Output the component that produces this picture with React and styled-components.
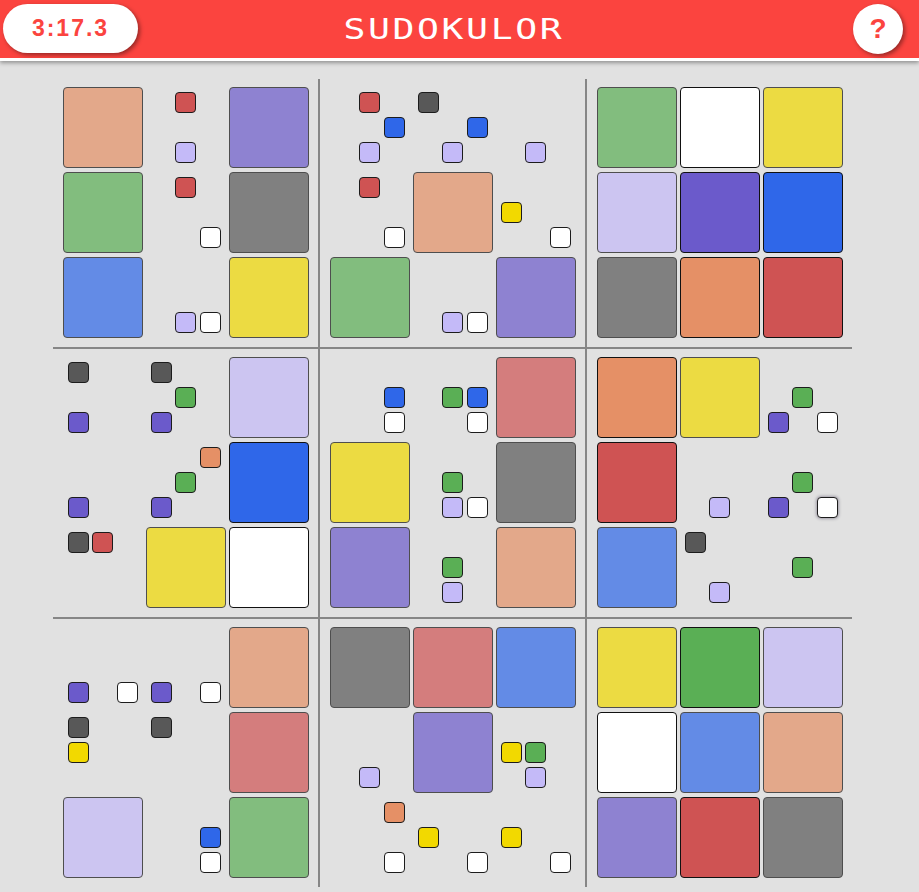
import React from 'react';
import styled, { createGlobalStyle } from 'styled-components';

const COLORS = {
  K: '#585858',
  R: '#cf5353',
  O: '#e59066',
  Y: '#f2d900',
  G: '#5aaf55',
  B: '#2f67e9',
  P: '#6b5acb',
  L: '#c4baf8',
  W: '#ffffff'
};
// place of each colour in the 3x3 note grid
const ORDER = 'KROYGBPLW';

// "=X" given square, "!X" placed square, otherwise notes
const BOARD = [
  ['=O', 'RL', '=P', 'RBL', 'KBL', 'L', '=G', '!W', '=Y'],
  ['=G', 'RW', '=K', 'RW', '=O', 'YW', '=L', '!P', '!B'],
  ['=B', 'LW', '=Y', '=G', 'LW', '=P', '=K', '!O', '!R'],
  ['KP', 'KGP', '=L', 'BW', 'GBW', '=R', '!O', '=Y', 'GPW'],
  ['P', 'OGP', '!B', '=Y', 'GLW', '=K', '!R', 'L', 'GPW'],
  ['KR', '=Y', '!W', '=P', 'GL', '=O', '=B', 'KL', 'G'],
  ['PW', 'PW', '=O', '=K', '=R', '=B', '=Y', '!G', '=L'],
  ['KY', 'K', '=R', 'L', '=P', 'YGL', '!W', '=B', '=O'],
  ['=L', 'BW', '=G', 'OW', 'YW', 'YW', '=P', '!R', '=K']
];
const FOCUS = { row: 4, col: 8, color: 'W' };

const GlobalStyle = createGlobalStyle`
  body {
    margin: 0;
    background-color: #e1e1e1;
    font-family: "Liberation Sans", Arial, sans-serif;
  }
`;

const Header = styled.div`
  height: 58px;
  background-color: #fb443f;
  border-bottom: 3px solid #ffffff;
  box-shadow: 0 2px 4px rgba(0, 0, 0, 0.35);
`;
const HeaderInner = styled.div`
  width: 904px;
  height: 100%;
  box-sizing: border-box;
  padding: 0 1px 0 3px;
  display: grid;
  grid-template-columns: 1fr auto 1fr;
  align-items: center;
`;
const Timer = styled.div`
  justify-self: start;
  width: 135px;
  height: 49px;
  margin-top: -2px;
  border-radius: 25px;
  background-color: #ffffff;
  box-shadow: 2px 2px 4px rgba(0, 0, 0, 0.4);
  display: flex;
  align-items: center;
  justify-content: center;
  color: #fb443f;
  font-weight: bold;
  font-size: 23px;
  letter-spacing: 2px;
`;
const Title = styled.div`
  color: #ffffff;
  font-family: "DejaVu Sans Mono", monospace;
  font-size: 28px;
  letter-spacing: 2px;
  margin-right: -2px;
  transform: scaleX(1.3);
`;
const Help = styled.div`
  justify-self: end;
  width: 50px;
  height: 50px;
  border-radius: 50%;
  background-color: #ffffff;
  box-shadow: 2px 2px 4px rgba(0, 0, 0, 0.4);
  display: flex;
  align-items: center;
  justify-content: center;
  color: #fb443f;
  font-weight: bold;
  font-size: 28px;
`;

const Main = styled.div`
  width: 904px;
  padding-top: 18px;
`;
const Board = styled.div`
  width: 799px;
  margin: 0 auto;
  display: grid;
  grid-template-columns: repeat(3, 265px);
  gap: 2px;
  background-color: #868686;
`;
const Block = styled.div`
  background-color: #e1e1e1;
  padding: 6px 8px 7px 9px;
  display: grid;
  grid-template-columns: repeat(3, 83px);
  grid-template-rows: repeat(3, 85px);
`;
const Square = styled.div`
  margin: 2px 1.5px;
  border: 1px solid #111111;
  border-radius: 4px;
  box-sizing: border-box;
  background-color: ${(p) => p.$color};
  opacity: ${(p) => (p.$given ? 0.7 : 1)};
`;
const Notes = styled.div`
  padding: 7px 0 0 6px;
  display: grid;
  grid-template-columns: repeat(3, 21px);
  grid-template-rows: repeat(3, 21px);
  column-gap: 3.5px;
  row-gap: 4px;
`;
const Note = styled.div`
  grid-column: ${(p) => (p.$pos % 3) + 1};
  grid-row: ${(p) => Math.floor(p.$pos / 3) + 1};
  border: 1px solid #1c1c1c;
  border-radius: 4px;
  box-sizing: border-box;
  background-color: ${(p) => p.$color};
  box-shadow: ${(p) => (p.$focus ? '0 0 3px 1px rgba(40, 30, 60, 0.35)' : 'none')};
`;

function Cell({ value, row, col }) {
  if (value[0] === '=' || value[0] === '!') {
    return <Square $color={COLORS[value[1]]} $given={value[0] === '='} />;
  }
  return (
    <Notes>
      {value.split('').map((c) => (
        <Note
          key={c}
          $pos={ORDER.indexOf(c)}
          $color={COLORS[c]}
          $focus={row === FOCUS.row && col === FOCUS.col && c === FOCUS.color}
        />
      ))}
    </Notes>
  );
}

export default function App() {
  const blocks = [];
  for (let b = 0; b < 9; b++) {
    const br = Math.floor(b / 3) * 3;
    const bc = (b % 3) * 3;
    const cells = [];
    for (let r = br; r < br + 3; r++) {
      for (let c = bc; c < bc + 3; c++) {
        cells.push(<Cell key={r + '-' + c} value={BOARD[r][c]} row={r} col={c} />);
      }
    }
    blocks.push(<Block key={b}>{cells}</Block>);
  }

  return (
    <>
      <GlobalStyle />
      <Header>
        <HeaderInner>
          <Timer>3:17.3</Timer>
          <Title>SUDOKULOR</Title>
          <Help>?</Help>
        </HeaderInner>
      </Header>
      <Main>
        <Board>{blocks}</Board>
      </Main>
    </>
  );
}
